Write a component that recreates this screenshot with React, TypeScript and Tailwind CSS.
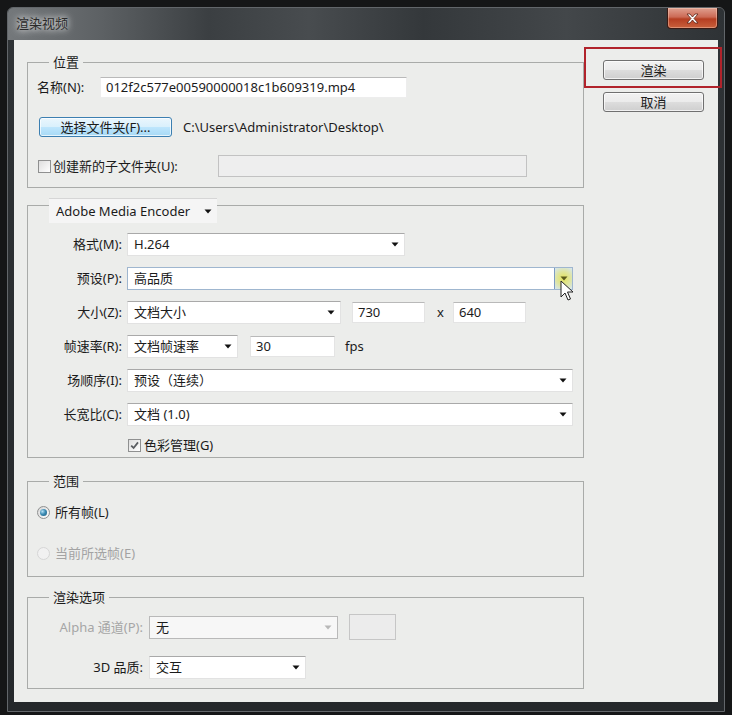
import clsx from "clsx";

const FONT = "font-['Noto_Sans','Noto_Sans_CJK_SC',sans-serif]";

function Arrow({ muted = false, color }: { muted?: boolean; color?: string }) {
  return (
    <svg width="8" height="5" viewBox="0 0 8 5" className="shrink-0">
      <path d="M0.5 0.5h7L4 4.6z" fill={color ?? (muted ? "#b8b8b8" : "#111")} />
    </svg>
  );
}

function Dropdown({
  value,
  className,
  disabled = false,
}: {
  value: string;
  className?: string;
  disabled?: boolean;
}) {
  return (
    <div
      className={clsx(
        "flex h-[23px] shrink-0 items-center justify-between border pl-[6px] pr-[5px]",
        disabled
          ? "border-[#b9b9b9] bg-[#f7f7f7]"
          : "border-[#e2e2e2] border-t-[#a9a9a9] bg-white",
        className,
      )}
    >
      <span className="leading-none">{value}</span>
      <Arrow muted={disabled} />
    </div>
  );
}

function TextBox({ value, className }: { value?: string; className?: string }) {
  return (
    <div
      className={clsx(
        "flex h-[21px] shrink-0 items-center border border-[#e4e4e4] border-t-[#b9b9b9] bg-white px-[5px] leading-none",
        className,
      )}
    >
      {value}
    </div>
  );
}

function CheckBox({ checked = false }: { checked?: boolean }) {
  return (
    <span className="flex h-[13px] w-[13px] shrink-0 items-center justify-center border border-[#8f9090] bg-[linear-gradient(135deg,#dedede,#ffffff)]">
      {checked ? (
        <svg width="9" height="9" viewBox="0 0 9 9">
          <path d="M1.2 4.6l2.4 2.4L8 1.4" stroke="#5b5e62" strokeWidth="1.8" fill="none" />
        </svg>
      ) : null}
    </span>
  );
}

function Radio({ checked = false, disabled = false }: { checked?: boolean; disabled?: boolean }) {
  return (
    <span
      className={clsx(
        "flex h-[13px] w-[13px] shrink-0 items-center justify-center rounded-full border",
        disabled
          ? "border-[#d6d6d6] bg-[#f1f1f1]"
          : "border-[#8f9090] bg-[linear-gradient(135deg,#d6d6d6,#ffffff)]",
      )}
    >
      {checked ? (
        <span className="h-[7px] w-[7px] rounded-full bg-[radial-gradient(circle_at_35%_35%,#b5e0f5_0%,#3c8cb4_45%,#1b5a7c_100%)]" />
      ) : null}
    </span>
  );
}

function WinButton({ label, hover = false, className }: { label: string; hover?: boolean; className?: string }) {
  return (
    <div
      className={clsx(
        "flex h-[20px] items-center justify-center rounded-[3px] border leading-none shadow-[inset_0_0_0_1px_rgba(255,255,255,0.7)]",
        hover
          ? "border-[#3c7fb1] bg-[linear-gradient(#eaf6fd_0%,#d9f0fc_50%,#bee6fd_50%,#a7d9f5_100%)]"
          : "border-[#707070] bg-[linear-gradient(#f2f2f2_0%,#ebebeb_50%,#dddddd_50%,#cfcfcf_100%)]",
        className,
      )}
    >
      {label}
    </div>
  );
}

function Legend({ children }: { children: React.ReactNode }) {
  return <legend className="ml-[21px] px-[4px] leading-[18px]">{children}</legend>;
}

function Row({
  label,
  labelWidth,
  className,
  children,
}: {
  label: string;
  labelWidth: string;
  className?: string;
  children: React.ReactNode;
}) {
  return (
    <div className={clsx("flex h-[23px] items-center", className)}>
      <span className={clsx("shrink-0 text-right leading-none", labelWidth)}>{label}</span>
      {children}
    </div>
  );
}

export default function App() {
  return (
    <div className={clsx("relative h-[715px] w-[732px] overflow-hidden bg-[#151617] text-[13px] text-[#1b1b1b]", FONT)}>
      <div className="ml-[7px] mt-[7px] flex h-[705px] w-[718px] flex-col rounded-t-[6px] border border-[#62666a] bg-[linear-gradient(#2f3336,#25282b)]">
        {/* title bar */}
        <div className="flex h-[32px] shrink-0 items-start justify-between rounded-t-[5px] bg-[linear-gradient(90deg,#74787b_0%,#5d6164_13%,#3b3f42_28%,#484c4f_42%,#34383b_58%,#43474a_78%,#2e3235_100%)]">
          <span className="pl-[8px] pt-[6px] leading-[18px] text-[#2a2a2a] [text-shadow:0_0_6px_rgba(255,255,255,0.9),0_0_10px_rgba(255,255,255,0.6)]">
            渲染视频
          </span>
          <div className="mr-[6px] flex h-[21px] w-[51px] items-center justify-center rounded-b-[4px] border border-t-0 border-[#3a1a14] bg-[linear-gradient(#e0a090_0%,#cc6a55_45%,#b53e22_55%,#c9603c_100%)] shadow-[inset_0_0_0_1px_rgba(255,220,200,0.4)]">
            <svg width="13" height="11" viewBox="0 0 13 11">
              <path
                d="M1 1h3l2.5 3 2.5-3h3l-4 4.5 4 4.5h-3L6.5 7 4 10H1l4-4.5z"
                fill="#fff"
                stroke="#5a2418"
                strokeWidth="0.8"
                strokeLinejoin="round"
              />
            </svg>
          </div>
        </div>

        {/* client area */}
        <div className="mx-[6px] flex h-[662px] shrink-0 bg-[#ecedeb]">
          {/* left column */}
          <div className="flex w-[570px] flex-col pl-[13px] pt-[13px]">
            {/* 位置 */}
            <fieldset className="w-[557px] border border-[#a9aba9]">
              <Legend>位置</Legend>
              <div className="flex flex-col pb-[10px] pl-[9px] pt-[6px]">
                <div className="flex h-[20px] items-center">
                  <span className="w-[63px] shrink-0 leading-none">名称(N):</span>
                  <TextBox value="012f2c577e00590000018c1b609319.mp4" className="h-[20px] w-[307px] border-[#ededed]" />
                </div>
                <div className="mt-[20px] flex h-[20px] items-center">
                  <WinButton label="选择文件夹(F)..." hover className="ml-[2px] w-[133px]" />
                  <span className="ml-[11px] leading-none">{"C:\\Users\\Administrator\\Desktop\\"}</span>
                </div>
                <div className="mt-[18px] flex h-[22px] items-center">
                  <div className="flex w-[181px] shrink-0 items-center">
                    <span className="ml-[1px]">
                      <CheckBox />
                    </span>
                    <span className="ml-[2px] leading-none">创建新的子文件夹(U):</span>
                  </div>
                  <div className="h-[22px] w-[309px] border border-[#c2c2c2] bg-[#eeeeee]" />
                </div>
              </div>
            </fieldset>

            {/* encoder settings */}
            <fieldset className="w-[557px] border border-[#a9aba9]">
              <legend className="ml-[21px] pt-[10px]">
                <div className="flex h-[25px] w-[168px] items-center justify-between border-t border-[#d6d6d6] bg-[#f5f5f5] pl-[7px] pr-[5px]">
                  <span className="leading-none">Adobe Media Encoder</span>
                  <Arrow />
                </div>
              </legend>
              <div className="flex flex-col gap-[11px] pb-[4px] pt-[10px]">
                <Row label="格式(M):" labelWidth="w-[94px]">
                  <Dropdown value="H.264" className="ml-[5px] w-[278px]" />
                </Row>
                <Row label="预设(P):" labelWidth="w-[94px]">
                  <div className="ml-[5px] flex h-[23px] w-[446px] items-center justify-between border border-[#9fb6cf] bg-white pl-[6px]">
                    <span className="leading-none">高品质</span>
                    <span className="flex h-full w-[18px] items-center justify-center border-l border-[#7d9cc4] bg-[radial-gradient(circle,#e4e35c_0%,#dfe59d_50%,#d6e6f3_100%)]">
                      <Arrow color="#5b5a1c" />
                    </span>
                  </div>
                </Row>
                <Row label="大小(Z):" labelWidth="w-[94px]">
                  <Dropdown value="文档大小" className="ml-[5px] w-[214px]" />
                  <TextBox value="730" className="ml-[11px] w-[73px]" />
                  <span className="ml-[12px] w-[7px] leading-none">x</span>
                  <TextBox value="640" className="ml-[9px] w-[73px]" />
                </Row>
                <Row label="帧速率(R):" labelWidth="w-[94px]">
                  <Dropdown value="文档帧速率" className="ml-[5px] w-[111px]" />
                  <TextBox value="30" className="ml-[12px] w-[85px]" />
                  <span className="ml-[10px] leading-none">fps</span>
                </Row>
                <Row label="场顺序(I):" labelWidth="w-[94px]">
                  <Dropdown value="预设（连续）" className="ml-[5px] w-[446px]" />
                </Row>
                <Row label="长宽比(C):" labelWidth="w-[94px]">
                  <Dropdown value="文档 (1.0)" className="ml-[5px] w-[446px]" />
                </Row>
                <div className="flex h-[16px] items-center pl-[100px]">
                  <CheckBox checked />
                  <span className="ml-[3px] leading-none">色彩管理(G)</span>
                </div>
              </div>
            </fieldset>

            {/* 范围 */}
            <fieldset className="mt-[14px] w-[557px] border border-[#a9aba9]">
              <Legend>范围</Legend>
              <div className="flex flex-col gap-[23px] pb-[14px] pl-[9px] pt-[13px]">
                <div className="flex h-[18px] items-center">
                  <Radio checked />
                  <span className="ml-[5px] leading-none">所有帧(L)</span>
                </div>
                <div className="flex h-[18px] items-center text-[#a3a3a3]">
                  <Radio disabled />
                  <span className="ml-[5px] leading-none">当前所选帧(E)</span>
                </div>
              </div>
            </fieldset>

            {/* 渲染选项 */}
            <fieldset className="mt-[11px] w-[557px] border border-[#a9aba9]">
              <Legend>渲染选项</Legend>
              <div className="flex flex-col pb-[9px] pt-[8px]">
                <div className="flex h-[26px] items-center">
                  <span className="w-[115px] shrink-0 text-right leading-none text-[#a6a6a6]">Alpha 通道(P):</span>
                  <Dropdown value="无" disabled className="ml-[6px] w-[189px]" />
                  <div className="ml-[11px] h-[26px] w-[47px] border border-[#c6c6c6] bg-[#ececec]" />
                </div>
                <Row label="3D 品质:" labelWidth="w-[115px]" className="mt-[16px]">
                  <Dropdown value="交互" className="ml-[6px] w-[157px]" />
                </Row>
              </div>
            </fieldset>
          </div>

          {/* right column */}
          <div className="ml-[19px] flex w-[101px] flex-col pt-[20px]">
            <WinButton label="渲染" />
            <WinButton label="取消" className="mt-[12px]" />
          </div>
        </div>
      </div>

      {/* highlight rectangle drawn over the dialog */}
      <div className="absolute left-[584px] top-[47px] h-[41px] w-[138px] border-2 border-[#b1232b]" />

      {/* mouse cursor */}
      <svg className="absolute left-[560px] top-[280px]" width="14" height="22" viewBox="0 0 14 22">
        <path d="M1 1v16l4-4 3 7 2.5-1-3-7h5.5z" fill="#fff" stroke="#222" strokeWidth="1" strokeLinejoin="round" />
      </svg>
    </div>
  );
}
